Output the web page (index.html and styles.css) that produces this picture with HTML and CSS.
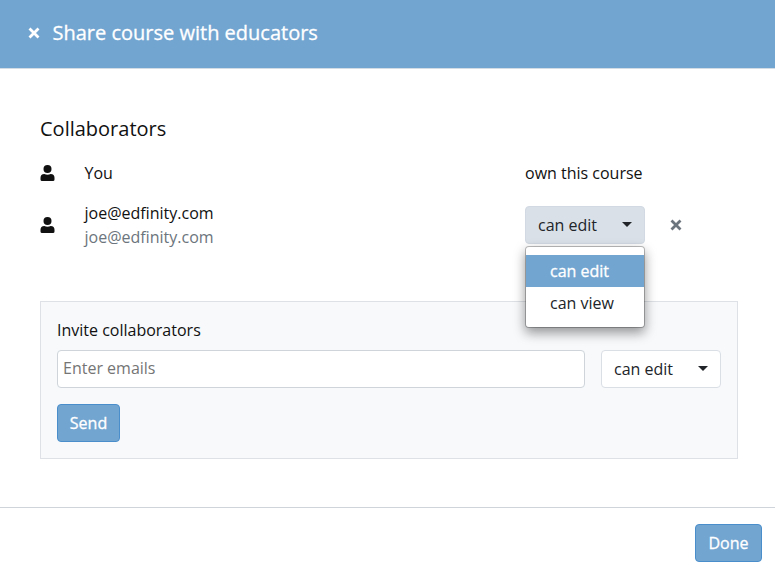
FILE: index.html
```html
<!DOCTYPE html>
<html lang="en">
<head>
<meta charset="UTF-8">
<meta name="viewport" content="width=device-width, initial-scale=1.0">
<title>Share course with educators</title>
<link rel="stylesheet" href="styles.css">
</head>
<body>

<div class="modal">
  <header class="modal-header">
    <button class="icon-btn" aria-label="Close">
      <svg class="icon-close" viewBox="0 0 12 12"><path d="M1.500 1.500L10.500 10.500M10.500 1.500L1.500 10.500"/></svg>
    </button>
    <h1 class="modal-title">Share course with educators</h1>
  </header>

  <main class="modal-body">
    <h2 class="section-title">Collaborators</h2>

    <div class="collaborator">
      <svg class="icon-user" viewBox="0 0 14 16"><circle cx="7" cy="4" r="4"/><path d="M3.800 9Q7 10.600 10.200 9A3.800 3.800 0 0 1 14 12.800v1.700A1.500 1.500 0 0 1 12.500 16h-11A1.500 1.500 0 0 1 0 14.500v-1.700A3.800 3.800 0 0 1 3.800 9z"/></svg>
      <div>You</div>
      <div>own this course</div>
    </div>

    <div class="collaborator">
      <svg class="icon-user" viewBox="0 0 14 16"><circle cx="7" cy="4" r="4"/><path d="M3.800 9Q7 10.600 10.200 9A3.800 3.800 0 0 1 14 12.800v1.700A1.500 1.500 0 0 1 12.500 16h-11A1.500 1.500 0 0 1 0 14.500v-1.700A3.800 3.800 0 0 1 3.800 9z"/></svg>
      <div>
        <div>joe@edfinity.com</div>
        <div class="text-muted">joe@edfinity.com</div>
      </div>
      <div class="dropdown">
        <button class="btn dropdown-toggle active">can edit</button>
        <div class="dropdown-menu">
          <a class="dropdown-item selected">can edit</a>
          <a class="dropdown-item">can view</a>
        </div>
      </div>
      <button class="icon-btn text-muted" aria-label="Remove">
        <svg class="icon-close" viewBox="0 0 12 12"><path d="M1.500 1.500L10.500 10.500M10.500 1.500L1.500 10.500"/></svg>
      </button>
    </div>

    <form class="invite">
      <label for="emails">Invite collaborators</label>
      <div class="invite-row">
        <input type="text" id="emails" name="emails" placeholder="Enter emails">
        <button type="button" class="btn dropdown-toggle">can edit</button>
      </div>
      <button type="button" class="btn btn-primary btn-send">Send</button>
    </form>
  </main>

  <footer class="modal-footer">
    <button class="btn btn-primary btn-done">Done</button>
  </footer>
</div>

</body>
</html>
```

FILE: styles.css
```css
* {
  box-sizing: border-box;
}

body {
  margin: 0;
  font-family: 'Open Sans', sans-serif;
  font-size: 16px;
  line-height: 24px;
  color: #111;
  background: #fff;
}

.modal {
  display: flex;
  flex-direction: column;
  height: 578px;
}

.modal-header {
  display: flex;
  align-items: center;
  height: 69px;
  padding: 0 28px 3px;
  background: #73a5d1;
  border-bottom: 1px solid #d3dbe4;
  color: #fff;
}

.modal-title {
  margin: 0 0 0 12.5px;
  font-size: 20px;
  font-weight: 400;
}

/* white text on blue needs a bit more weight */
.modal-title,
.btn-primary,
.dropdown-item.selected {
  -webkit-text-stroke: 0.3px #fff;
}

.modal-body {
  flex: 1;
  padding: 47px 37px 0 40px;
}

.section-title {
  margin: 0 0 19px;
  font-size: 20px;
  font-weight: 400;
  line-height: 26px;
}

.collaborator {
  display: grid;
  grid-template-columns: 44.5px 440.5px 120px auto;
  align-items: center;
  justify-content: start;
  margin-bottom: 16px;
}

.text-muted {
  color: #6c757d;
}

/* icons */
.icon-user {
  width: 15px;
  height: 16px;
  fill: #111;
}

.icon-close {
  display: block;
  width: 12px;
  height: 12px;
  stroke: currentColor;
  stroke-width: 2.800;
}

.icon-btn {
  padding: 0;
  border: none;
  background: none;
  cursor: pointer;
}

.modal-header .icon-btn {
  color: #fff;
}

.collaborator .icon-btn {
  margin-left: 24.5px;
  color: #6c757d;
}

/* buttons */
.btn {
  height: 38px;
  padding: 0 12px;
  border: 1px solid #dadfe6;
  border-radius: 4px;
  background: #fff;
  color: #212529;
  font: inherit;
  cursor: pointer;
}

.btn-primary {
  padding: 0 11px;
  background: #73a5d1;
  border-color: #4a8fcb;
  color: #fff;
}

.btn-send {
  width: 63px;
}

.btn-done {
  width: 67px;
}

.dropdown-toggle {
  display: flex;
  align-items: center;
  justify-content: space-between;
  width: 120px;
}

.dropdown-toggle::after {
  content: "";
  border-top: 5px solid;
  border-left: 5px solid transparent;
  border-right: 5px solid transparent;
  margin-bottom: 2px;
}

.dropdown-toggle.active {
  background: #dae0e7;
  border-color: #d2d9e2;
}

.dropdown {
  position: relative;
}

.dropdown-menu {
  position: absolute;
  top: 40px;
  left: 0;
  width: 120px;
  padding: 8px 0;
  border: 1px solid rgba(0, 0, 0, 0.25);
  border-radius: 4px;
  background: #fff;
  background-clip: padding-box;
  box-shadow: 0 5px 12px rgba(0, 0, 0, 0.4);
  z-index: 10;
}

.dropdown-item {
  display: block;
  padding: 4px 24px;
  color: #212529;
}

.dropdown-item.selected {
  background: #73a5d1;
  color: #fff;
}

/* invite form */
.invite {
  margin-top: 52px;
  padding: 16px;
  border: 1px solid #dee2e6;
  background: #f7f9fb;
}

.invite label {
  display: block;
  margin-bottom: 8px;
}

.invite-row {
  display: flex;
  gap: 16px;
  margin-bottom: 16px;
}

.invite input {
  flex: 1;
  height: 38px;
  padding: 0 5px 2px;
  border: 1px solid #ced4da;
  border-radius: 4px;
  font: inherit;
}

.invite input::placeholder {
  color: #757575;
}

.modal-footer {
  display: flex;
  justify-content: flex-end;
  height: 71px;
  padding: 16px 13px;
  border-top: 1px solid #ced4da;
}
```
